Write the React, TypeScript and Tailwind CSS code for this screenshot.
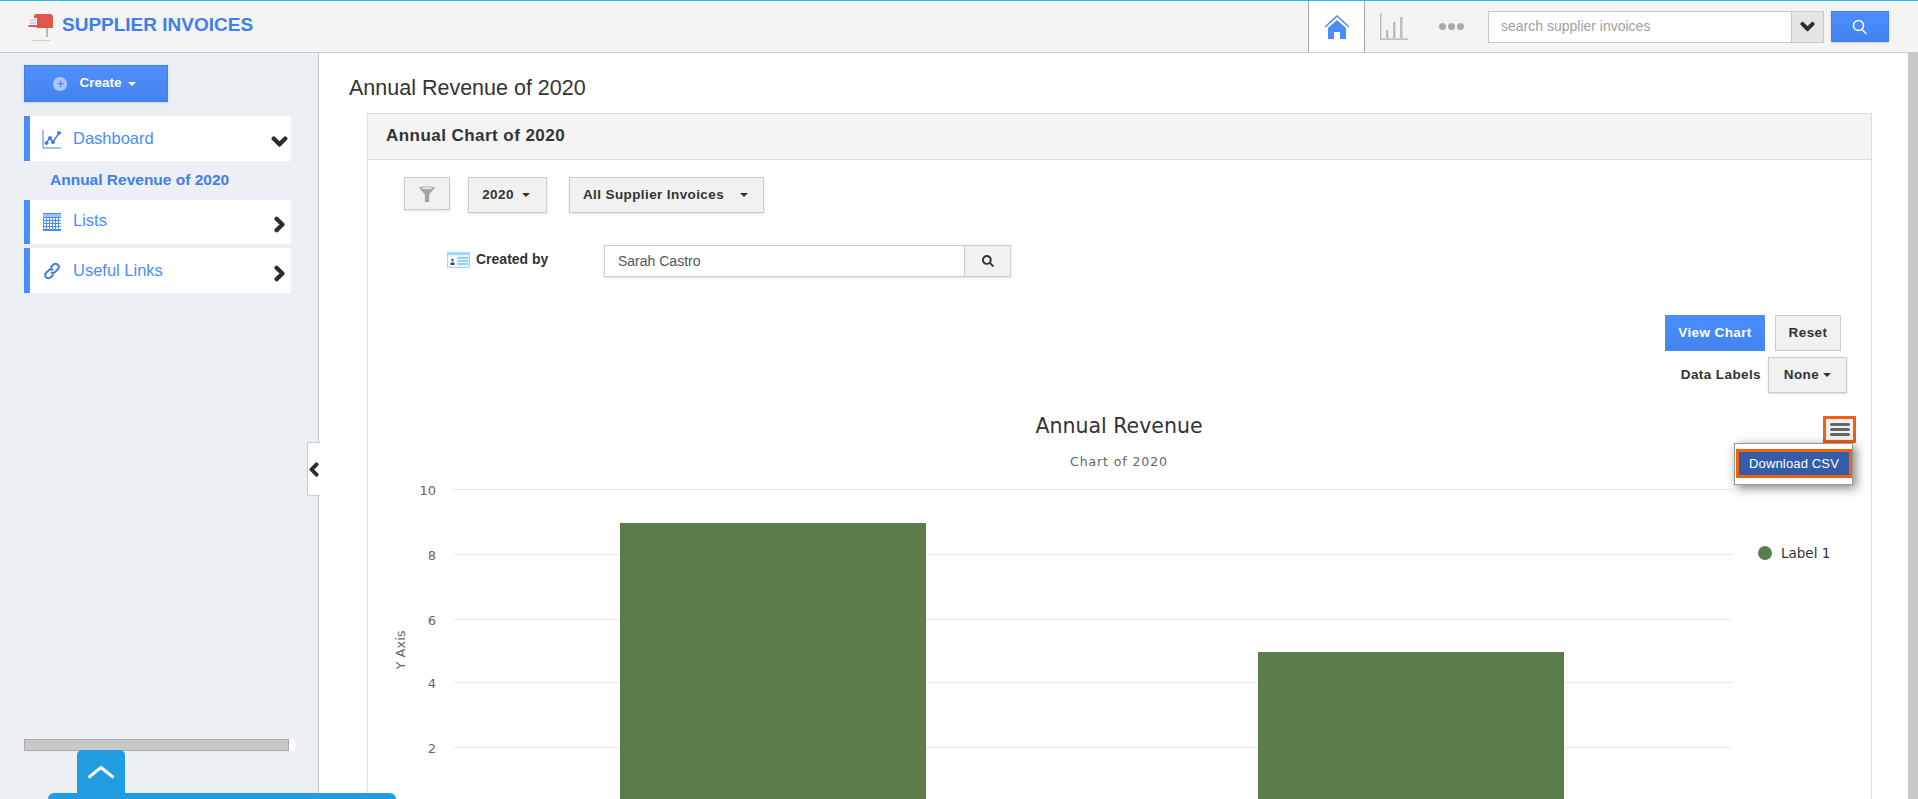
import { FaChevronDown, FaChevronLeft, FaChevronRight, FaSearch } from "react-icons/fa";

function Mailbox() {
  return (
    <svg width="26" height="28" viewBox="0 0 26 28" className="shrink-0">
      <path d="M8 1h14a3 3 0 0 1 3 3v11H9l-1-1H0l1-2 1-1V5h4a3 3 0 0 1 2-4z" fill="#e2574c" />
      <rect x="1" y="5" width="8" height="7" fill="#f2f2f2" />
      <path d="M2 7h6M2 10h6" stroke="#bbb" strokeWidth="1" />
      <rect x="18" y="15" width="2" height="9" fill="#b8b8b8" />
      <path d="M3 27.500h19" stroke="#e9c9a8" strokeWidth="1" />
    </svg>
  );
}

function ChartLine() {
  return (
    <svg width="20" height="20" viewBox="0 0 20 20" fill="none" stroke="#3f7fe8">
      <path d="M1 1v18h18" strokeWidth="1" />
      <path d="M4 14l4-5 3 4 6-9" strokeWidth="1.500" />
      <circle cx="4.500" cy="14" r="1.500" fill="#3f7fe8" />
      <circle cx="8" cy="9" r="1.500" fill="#3f7fe8" />
      <circle cx="11" cy="13" r="1.500" fill="#3f7fe8" />
      <circle cx="17" cy="4" r="1.500" fill="#3f7fe8" />
    </svg>
  );
}

function CalendarGrid() {
  return (
    <svg width="18" height="18" viewBox="0 0 18 18">
      <rect width="18" height="18" fill="#4a8cff" />
      <rect x="0" y="1" width="18" height="3" fill="#9cc0fa" />
      {[5, 8, 11, 14].map((y) =>
        [1, 4, 7, 10, 13, 16].map((x) => <rect key={x + "-" + y} x={x} y={y} width="2" height="2" fill="#fff" />)
      )}
    </svg>
  );
}

function LinkIcon() {
  return (
    <svg width="18" height="18" viewBox="0 0 18 18" fill="none" stroke="#3f7fe8" strokeWidth="2">
      <path d="M7.500 5.500l3-3a3 3 0 0 1 4.500 0.500 3 3 0 0 1 0 4l-3 3a3 3 0 0 1-4 0" />
      <path d="M10.500 12.500l-3 3a3 3 0 0 1-4.500-0.500 3 3 0 0 1 0-4l3-3a3 3 0 0 1 4 0" />
    </svg>
  );
}

function Funnel() {
  return (
    <svg width="18" height="18" viewBox="0 0 17 17">
      <path d="M1 2.500C1 1 16 1 16 2.500L10.500 9v7h-4V9z" fill="#a3a3a3" />
      <ellipse cx="8.500" cy="3" rx="5.500" ry="1" fill="#e6e6e6" />
    </svg>
  );
}

function IdCard() {
  return (
    <svg width="23" height="16" viewBox="0 0 23 16">
      <rect width="23" height="16" fill="#9fd8fb" />
      <rect x="1" y="3" width="21" height="12" fill="#e8f6fe" />
      <rect x="2" y="5" width="7" height="9" fill="#fff" />
      <circle cx="5.500" cy="8" r="1.500" fill="#c2564a" />
      <rect x="3.500" y="10.500" width="4" height="2.500" fill="#444" />
      <path d="M10.500 6h11M10.500 9h11M10.500 12h11" stroke="#7cc4f2" strokeWidth="1.500" />
    </svg>
  );
}

function Caret() {
  return <span className="inline-block h-0 w-0 border-x-[4px] border-t-[4px] border-x-transparent border-t-[#333]" />;
}

function SideItem({ icon, label, open, className, textClass }: { icon: React.ReactNode; label: string; open?: boolean; className: string; textClass?: string }) {
  return (
    <div className={"flex w-[267px] items-center border-l-[6px] border-[#4a8cff] bg-white text-[16.500px] text-[#4a8cff] " + className}>
      <div className="flex w-[37px] justify-center pl-[6px]">{icon}</div>
      <span className={"ml-[6px] flex-1 " + (textClass ?? "")}>{label}</span>
      <span className="mr-[3px] pt-[5px] text-[#2d2d2d]">
        {open ? <FaChevronDown size={17} stroke="currentColor" strokeWidth={50} /> : <FaChevronRight size={17} stroke="currentColor" strokeWidth={50} />}
      </span>
    </div>
  );
}

function Chart() {
  const ticks = [
    { v: "10", y: 489.5 },
    { v: "8", y: 554.5 },
    { v: "6", y: 619.5 },
    { v: "4", y: 682.5 },
    { v: "2", y: 747.5 },
  ];
  return (
    <svg width="1502" height="400" viewBox="368 400 1502 400" className="block" style={{ fontFamily: "'DejaVu Sans', sans-serif" }}>
      <text x="1119" y="433" textAnchor="middle" fontSize="20.500" fill="#333">Annual Revenue</text>
      <text x="1119" y="466" textAnchor="middle" fontSize="12.500" letterSpacing="0.900" fill="#666">Chart of 2020</text>
      {ticks.map((t) => (
        <g key={t.v}>
          <line x1="454" x2="1732" y1={t.y} y2={t.y} stroke="#e6e6e6" />
          <text x="436" y={t.y + 5} textAnchor="end" fontSize="13" fill="#666">{t.v}</text>
        </g>
      ))}
      <text transform="translate(405 650) rotate(-90)" textAnchor="middle" fontSize="13" fill="#666">Y Axis</text>
      <rect x="620" y="523" width="306" height="280" fill="#5a7d4b" />
      <rect x="1258" y="652" width="306" height="150" fill="#5a7d4b" />
      <circle cx="1765" cy="553" r="7" fill="#5a7d4b" />
      <text x="1781" y="558" fontSize="13.500" fill="#333">Label 1</text>
    </svg>
  );
}

export default function App() {
  return (
    <div className="relative flex h-screen w-full flex-col overflow-hidden bg-white font-['Liberation_Sans',Arial,sans-serif] text-[#333]">
      {/* Header */}
      <header className="flex h-[53px] shrink-0 items-center border-t border-b border-t-[#29b6f6] border-b-[#c8c8c8] bg-[#f4f4f4]">
        <div className="ml-[28px] flex items-center">
          <Mailbox />
          <span className="ml-[8px] mt-[-3px] text-[19px] font-bold text-[#3f7fe8]">SUPPLIER INVOICES</span>
        </div>
        <div className="ml-auto flex h-full items-center pr-[29px]">
          <div className="flex h-full w-[57px] items-center justify-center border-x border-[#aaa] bg-white">
            <svg width="26" height="26" viewBox="0 0 26 26">
              <path d="M1 13L13 2l12 11" fill="none" stroke="#4a8cff" strokeWidth="1.500" />
              <path d="M4 14l9-8 9 8v11h-6v-7h-6v7H4z" fill="#4a8cff" />
            </svg>
          </div>
          <svg width="28" height="27" viewBox="0 0 28 27" className="ml-[15px]" fill="#bdbdbd">
            <rect x="0" y="0" width="1.500" height="27" />
            <rect x="0" y="25.500" width="28" height="1.500" />
            <rect x="6" y="17" width="2.500" height="8" />
            <rect x="13" y="9" width="2.500" height="16" />
            <rect x="20" y="4" width="2.500" height="21" />
          </svg>
          <div className="ml-[31px] flex gap-[2px]">
            <span className="h-[7px] w-[7px] rounded-full bg-[#aaa]" />
            <span className="h-[7px] w-[7px] rounded-full bg-[#aaa]" />
            <span className="h-[7px] w-[7px] rounded-full bg-[#aaa]" />
          </div>
          <div className="ml-[24px] flex h-[32px] w-[336px] items-center border border-[#c8c8c8] bg-white">
            <span className="flex-1 pl-[12px] text-[14px] text-[#a0a0a0]">search supplier invoices</span>
            <span className="flex h-full w-[32px] items-center justify-center border-l border-[#c8c8c8] bg-[#e4e4e4] text-[#2d2d2d]">
              <FaChevronDown size={15} stroke="currentColor" strokeWidth={50} />
            </span>
          </div>
          <div className="ml-[7px] flex h-[31px] w-[58px] items-center justify-center border border-[#3f7fe8] bg-gradient-to-b from-[#4a8eff] to-[#4284ee] shadow-sm">
            <svg width="16" height="16" viewBox="0 0 16 16" fill="none" stroke="#fff" strokeWidth="1.500">
              <circle cx="6.500" cy="6.500" r="5" />
              <path d="M10 10.500l4.500 4.500" />
            </svg>
          </div>
        </div>
      </header>

      <div className="flex min-h-0 flex-1">
        {/* Sidebar */}
        <aside className="relative flex w-[319px] shrink-0 flex-col border-r border-[#c8c8c8] bg-[#eceff4] pl-[24px] pt-[12px]">
          <div className="flex h-[37px] w-[144px] items-center justify-center border border-[#3f7fe8] bg-gradient-to-b from-[#4f90ff] to-[#4583ec] pr-[3px] text-[13.500px] font-bold text-white shadow-sm">
            <span className="mr-[12px] flex h-[14px] w-[14px] items-center justify-center rounded-full bg-[#a9c8fb] text-[13px] leading-none text-[#4a8cff]">+</span>
            Create
            <span className="ml-[6px] inline-block h-0 w-0 border-x-[4px] border-t-[4px] border-x-transparent border-t-white" />
          </div>
          <SideItem icon={<ChartLine />} label="Dashboard" open className="mt-[14px] h-[45px]" />
          <div className="flex h-[39px] items-center pl-[26px] pb-[2px] text-[15.500px] font-bold text-[#3f7fe8]">Annual Revenue of 2020</div>
          <SideItem icon={<CalendarGrid />} label="Lists" textClass="mt-[-3px]" className="h-[44px]" />
          <SideItem icon={<LinkIcon />} label="Useful Links" className="mt-[4px] h-[45px]" />
          <div className="mt-auto mb-[48px] flex h-[12px] w-[271px]">
            <div className="h-full w-[265px] border border-[#aaa] bg-[#c8c8c8]" />
            <div className="h-full w-[6px] bg-white" />
          </div>
          <div className="absolute right-[-2px] top-[389px] flex h-[54px] w-[13px] items-center justify-center rounded-l-[2px] border border-r-0 border-[#ccc] bg-white text-[#2d2d2d]">
            <FaChevronLeft size={15} stroke="currentColor" strokeWidth={50} />
          </div>
        </aside>

        {/* Main */}
        <main className="min-w-0 flex-1 pt-[20px]">
          <h1 className="ml-[30px] text-[21.500px] leading-[30px] text-[#333]">Annual Revenue of 2020</h1>
          <section className="ml-[48px] mr-[36px] mt-[10px] border border-[#ddd]">
            <div className="flex h-[46px] items-center border-b border-[#ddd] bg-[#f4f4f4] pl-[18px] pb-[2px] text-[17px] font-bold tracking-[0.45px] text-[#333]">
              Annual Chart of 2020
            </div>
            <div className="flex items-start pl-[36px] pt-[17px] text-[13.500px] font-bold tracking-[0.4px]">
              <button className="flex h-[33px] w-[46px] items-center justify-center border border-[#ccc] bg-[#f1f1f1] shadow-sm">
                <Funnel />
              </button>
              <button className="ml-[18px] flex h-[36px] w-[79px] items-center justify-center gap-[8px] border border-[#ccc] bg-[#f1f1f1] pr-[3px] shadow-sm">
                2020 <Caret />
              </button>
              <button className="ml-[22px] flex h-[36px] w-[195px] items-center justify-center gap-[16px] border border-[#ccc] bg-[#f1f1f1] pr-[2px] shadow-sm">
                All Supplier Invoices <Caret />
              </button>
            </div>
            <div className="flex items-start pl-[79px] pt-[32px]">
              <div className="flex w-[157px] items-center gap-[6px] pt-[4px] text-[14px] font-bold">
                <IdCard />
                Created by
              </div>
              <div className="flex h-[32px] w-[407px] border border-[#ccc] shadow-sm">
                <span className="flex flex-1 items-center pl-[13px] text-[14px] text-[#555]">Sarah Castro</span>
                <span className="flex w-[46px] items-center justify-center border-l border-[#ccc] bg-[#f1f1f1] text-[#333]">
                  <FaSearch size={12} />
                </span>
              </div>
            </div>
            <div className="flex justify-end gap-[10px] pr-[30px] pt-[38px] text-[13.500px] font-bold tracking-[0.4px]">
              <button className="h-[36px] w-[100px] border border-[#4a8cff] bg-gradient-to-b from-[#4a8eff] to-[#4284ee] text-white">View Chart</button>
              <button className="h-[36px] w-[66px] border border-[#ccc] bg-[#f1f1f1]">Reset</button>
            </div>
            <div className="flex items-center justify-end gap-[7px] pr-[24px] pt-[6px] text-[13.500px] font-bold tracking-[0.4px]">
              <span>Data Labels</span>
              <button className="flex h-[36px] w-[79px] items-center justify-center gap-[4px] border border-[#ccc] bg-[#f1f1f1] shadow-sm">
                None <Caret />
              </button>
            </div>
            <div className="relative mt-[7px]">
              <Chart />
              {/* Export menu, highlighted */}
              <div className="absolute left-[1455px] top-[16px] flex h-[27px] w-[33px] flex-col items-center justify-center gap-[2px] border-[3px] border-[#f4600c] bg-[#f2f2f2]">
                <span className="h-[3px] w-[20px] rounded-sm bg-[#666]" />
                <span className="h-[3px] w-[20px] rounded-sm bg-[#666]" />
                <span className="h-[3px] w-[20px] rounded-sm bg-[#666]" />
              </div>
              <div className="absolute left-[1366px] top-[43px] h-[42px] w-[119px] border border-[#999] bg-white shadow-[3px_3px_10px_rgba(0,0,0,0.5)]">
                <div className="ml-[1px] mt-[5px] flex h-[29px] w-[116px] items-center justify-center border-[3px] border-[#f4600c] bg-[#335caa] text-[13px] tracking-[0.15px] text-white">
                  Download CSV
                </div>
              </div>
            </div>
          </section>
        </main>

        {/* Page scrollbar */}
        <div className="w-[10px] shrink-0 bg-[#c8c8c8]" />
      </div>

      {/* Bottom tab */}
      <div className="absolute bottom-[6px] left-[77px] flex h-[43px] w-[48px] items-center justify-center rounded-t-[5px] bg-[#1f9de0]">
        <svg width="28" height="14" viewBox="0 0 28 14" fill="none" stroke="#fff" strokeWidth="3">
          <path d="M1.500 12.500L14 2.500l12.500 10" />
        </svg>
      </div>
      <div className="absolute bottom-0 left-[48px] h-[6px] w-[348px] rounded-t-[8px] bg-[#1f9de0]" />
    </div>
  );
}
